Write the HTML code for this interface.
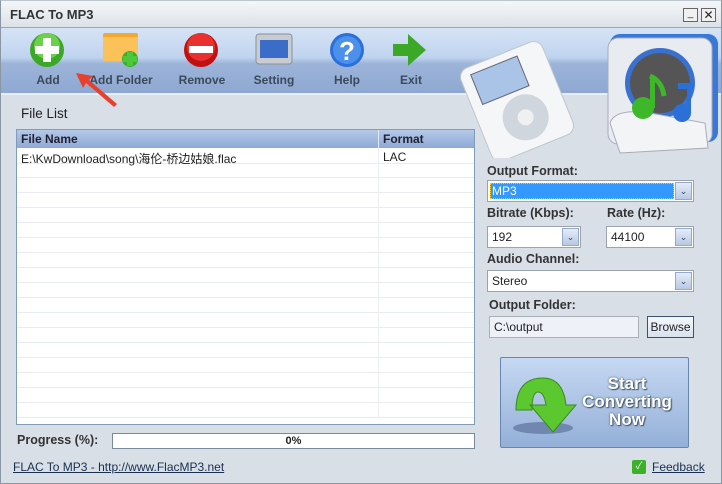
<!DOCTYPE html>
<html><head><meta charset="utf-8"><style>
*{margin:0;padding:0;box-sizing:border-box}
body{width:722px;height:484px;overflow:hidden;font-family:"Liberation Sans","Noto Sans CJK SC",sans-serif;font-size:12px;color:#222;background:#d8dfe6;position:relative}
.abs{position:absolute}
.win{left:0;top:0;width:722px;height:484px;border:1px solid #8a96a4;border-top-color:#bcc4cc}
.title{left:1px;top:1px;width:720px;height:27px;background:linear-gradient(#f4f6f8,#dde2e8);border-bottom:1px solid #9aa6b4}
.title span{position:absolute;left:9px;top:6px;font-weight:bold;font-size:13px;color:#333}
.tb{left:1px;top:28px;width:720px;height:67px;background:linear-gradient(#d6e3f5 0%,#c0d4ef 45%,#9db4d8 55%,#8ea8d2 100%);border-bottom:2px solid #e8eef4}
.lbl{font-weight:bold;font-size:12px;color:#3a4a5a;top:73px;text-align:center;width:80px}
.list{left:16px;top:129px;width:459px;height:296px;background:#fff;border:1px solid #7f9db9}
.hdr{left:0;top:0;width:457px;height:18px;background:linear-gradient(#b5c9e8,#8ea9d6);font-weight:bold;color:#223;font-size:12px}
.lab{font-weight:bold;color:#333;font-size:12.5px}
.sel{background:#fff;border:1px solid #9aa4ae;height:22px}
.sel span{position:absolute;left:4px;top:3px;font-size:12px}
.dd{position:absolute;right:1px;top:1px;width:17px;height:18px;background:linear-gradient(#e4ecf8,#b8c8e4);border:1px solid #98a8c8;font-size:9px;text-align:center;line-height:16px;color:#345}
</style></head><body>
<div class="abs win"></div>
<div class="abs title"><span>FLAC To MP3</span>
<div class="abs" style="left:682px;top:7px;width:15px;height:14px;border:1px solid #666;background:#f0f0f0;font-size:10px;line-height:10px;text-align:center">_</div>
<div class="abs" style="left:700px;top:7px;width:15px;height:14px;border:1px solid #666;background:#f0f0f0;font-size:12px;line-height:12px;text-align:center">✕</div></div>
<div class="abs tb"></div>
<svg class="abs" style="left:0;top:28px" width="440" height="70">
<circle cx="47" cy="22" r="17" fill="#3ca828"/><circle cx="47" cy="18" r="13" fill="#6cd04a"/><rect x="43" y="10" width="8" height="24" fill="#fff"/><rect x="35" y="18" width="24" height="8" fill="#fff"/>
<rect x="103" y="5" width="35" height="28" rx="2" fill="#f5a830"/><rect x="103" y="9" width="35" height="24" fill="#fcc25a"/><circle cx="130" cy="31" r="8" fill="#3cac2c"/><rect x="127" y="24" width="6" height="14" fill="#4cc83a"/><rect x="123" y="28" width="14" height="6" fill="#4cc83a"/>
<circle cx="201" cy="22" r="17" fill="#c01010"/><circle cx="201" cy="19" r="14" fill="#e83030"/><rect x="189" y="18" width="24" height="7" fill="#fff"/>
<rect x="256" y="6" width="36" height="30" rx="3" fill="#c8ccd0" stroke="#8a9096"/><rect x="260" y="12" width="28" height="18" fill="#3b6cc8"/>
<circle cx="347" cy="22" r="17" fill="#2a70d8"/><circle cx="347" cy="22" r="14" fill="#4a90ec"/><text x="347" y="32" text-anchor="middle" font-size="26" font-weight="bold" fill="#fff" font-family="Liberation Sans">?</text>
<path d="M393 16h15v-10l18 16-18 16v-10h-15z" fill="#3ca828"/>
</svg>
<div class="abs lbl" style="left:8px">Add</div>
<div class="abs lbl" style="left:81px">Add Folder</div>
<div class="abs lbl" style="left:162px">Remove</div>
<div class="abs lbl" style="left:234px">Setting</div>
<div class="abs lbl" style="left:307px">Help</div>
<div class="abs lbl" style="left:371px">Exit</div>
<svg class="abs" style="left:0;top:0;z-index:5" width="130" height="115"><path d="M76 73 L93 76 L89 80 L117 104 L114 107 L86 83 L83 88 Z" fill="#e8402c"/></svg>
<svg class="abs" style="left:450px;top:28px" width="272" height="130">
<g transform="rotate(-22 70 70)"><rect x="22" y="22" width="88" height="100" rx="10" fill="#f4f6f8" stroke="#c0c6cc"/><rect x="33" y="30" width="50" height="32" fill="#aac4e8" stroke="#667"/><circle cx="68" cy="90" r="23" fill="#d0d6de"/><circle cx="68" cy="90" r="8" fill="#eef0f2"/></g>
<rect x="160" y="6" width="108" height="108" rx="10" fill="#3a78d8"/><rect x="158" y="10" width="104" height="106" rx="10" fill="#e8ecf0" stroke="#aab"/>
<circle cx="210" cy="55" r="35" fill="#3a70d0"/><circle cx="210" cy="55" r="30" fill="#555"/>
<path d="M160 95 Q165 80 200 85 L255 95 L258 120 L170 125 Z" fill="#f2f4f6" stroke="#aab"/>
<circle cx="193" cy="80" r="11" fill="#3cb828"/><rect x="200" y="50" width="5" height="30" fill="#3cb828"/><path d="M200 48 q12 5 14 20" stroke="#3cb828" stroke-width="5" fill="none"/>
<circle cx="232" cy="85" r="9" fill="#2a70d8"/><rect x="237" y="55" width="4" height="30" fill="#2a70d8"/><path d="M228 55 h15 v6 h-15z" fill="#2a70d8"/>
</svg>
<div class="abs" style="left:21px;top:106px;font-size:13.5px;color:#222">File List</div>
<div class="abs list">
<div class="abs hdr"><span style="position:absolute;left:4px;top:2px">File Name</span><span style="position:absolute;left:366px;top:2px">Format</span><div style="position:absolute;left:361px;top:0;width:1px;height:18px;background:#e0e8f4"></div></div>
<div class="abs" style="left:0;top:33px;width:457px;height:255px;background:repeating-linear-gradient(transparent 0 14px,#e8ecf0 14px 15px)"></div>
<div class="abs" style="left:0;top:33px;width:457px;height:1px;background:#e8ecf0"></div>
<div class="abs" style="left:361px;top:18px;width:1px;height:270px;background:#ebeef2"></div>
<div class="abs" style="left:4px;top:20px;font-size:12px">E:\KwDownload\song\海伦-桥边姑娘.flac</div>
<div class="abs" style="left:366px;top:20px;font-size:12px">LAC</div>
</div>
<div class="abs lab" style="left:17px;top:433px">Progress (%):</div>
<div class="abs" style="left:112px;top:433px;width:363px;height:16px;background:#fff;border:1px solid #7a8a9c;text-align:center;font-weight:bold;font-size:11px;line-height:14px">0%</div>
<div class="abs" style="left:13px;top:460px;font-size:12px;text-decoration:underline;color:#1a3050">FLAC To MP3 - http://www.FlacMP3.net</div>
<div class="abs lab" style="left:487px;top:164px">Output Format:</div>
<div class="abs sel" style="left:487px;top:180px;width:207px"><div style="position:absolute;left:2px;top:2px;width:184px;height:16px;background:#3399ff;border:1px dotted #fc0"></div><span style="color:#fff">MP3</span><div class="dd">⌄</div></div>
<div class="abs lab" style="left:487px;top:206px">Bitrate (Kbps):</div>
<div class="abs lab" style="left:607px;top:206px">Rate (Hz):</div>
<div class="abs sel" style="left:487px;top:226px;width:94px"><span>192</span><div class="dd">⌄</div></div>
<div class="abs sel" style="left:606px;top:226px;width:88px"><span>44100</span><div class="dd">⌄</div></div>
<div class="abs lab" style="left:487px;top:252px">Audio Channel:</div>
<div class="abs sel" style="left:487px;top:270px;width:207px"><span>Stereo</span><div class="dd">⌄</div></div>
<div class="abs lab" style="left:489px;top:298px">Output Folder:</div>
<div class="abs" style="left:489px;top:316px;width:150px;height:22px;background:#eef2f8;border:1px solid #a8b0b8;padding:3px 4px;font-size:12px">C:\output</div>
<div class="abs" style="left:647px;top:316px;width:47px;height:22px;background:linear-gradient(#f4f8fc,#d8e2ee);border:1px solid #3c5070;font-size:12px;text-align:center;line-height:20px">Browse</div>
<div class="abs" style="left:500px;top:357px;width:189px;height:91px;background:linear-gradient(#c6d8f2,#94b0d8);border:1px solid #6a84b0;border-radius:2px"></div>
<svg class="abs" style="left:508px;top:370px" width="80" height="70"><ellipse cx="35" cy="58" rx="30" ry="6" fill="#7088b0"/><path d="M8 40 Q8 8 35 8 Q55 8 58 35 L68 35 L45 62 L22 35 L38 35 Q36 22 30 22 Q24 22 24 40Z" fill="#5cc830" stroke="#3a8a20"/></svg>
<div class="abs" style="left:570px;top:375px;width:114px;text-align:center;font-weight:bold;font-size:17px;line-height:18px;color:#fff;text-shadow:0 0 2px #456,1px 1px 1px #456">Start<br>Converting<br>Now</div>
<div class="abs" style="left:632px;top:460px;width:14px;height:14px;background:#3cb028;border-radius:2px;color:#fff;font-size:10px;text-align:center;line-height:14px">✓</div>
<div class="abs" style="left:652px;top:460px;font-size:12px;text-decoration:underline;color:#1a3050">Feedback</div>
</body></html>
